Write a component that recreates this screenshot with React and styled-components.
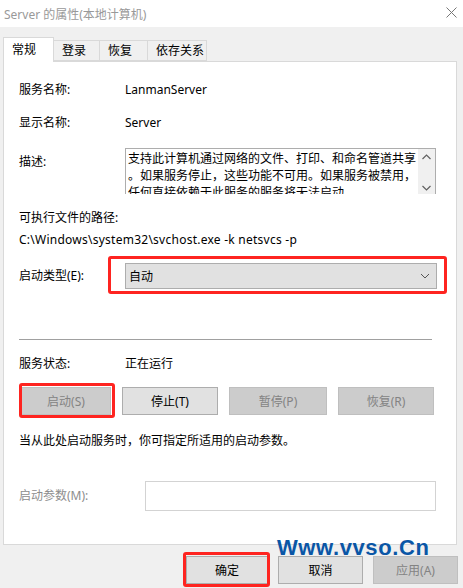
import React from 'react';
import styled, { createGlobalStyle } from 'styled-components';

const Global = createGlobalStyle`
  html, body {
    margin: 0;
    padding: 0;
    background: #f0f0f0;
  }
  body {
    font-family: "Noto Sans", "Noto Sans CJK SC", sans-serif;
    font-size: 12px;
    color: #000;
  }
`

const Window = styled.div`
  width: 463px;
  height: 588px;
  position: relative;
  overflow: hidden;
  background: #f0f0f0;
`
const TitleBar = styled.div`
  height: 27px;
  background: #fff;
  display: flex;
  align-items: center;
  justify-content: space-between;
  padding: 0 6px 0 4px;
  color: #999;
  font-size: 12px;
`
const CloseX = styled.svg`
  width: 11px;
  height: 11px;
  margin-top: -3px;
`
const Tabs = styled.div`
  display: flex;
  align-items: flex-end;
  margin: 9px 0 0 3px;
  height: 25px;
`
const Tab = styled.div`
  height: ${p => (p.$active ? '25px' : '21px')};
  width: ${p => p.$w}px;
  box-sizing: border-box;
  border: 1px solid #d9d9d9;
  border-bottom: ${p => (p.$active ? 'none' : '1px solid #d9d9d9')};
  border-left: ${p => (p.$first ? '1px solid #d9d9d9' : 'none')};
  background: ${p => (p.$active ? '#fff' : '#f0f0f0')};
  padding: ${p => (p.$active ? '2px 0 0 8px' : '0 0 0 8px')};
  line-height: 19px;
  position: relative;
  z-index: ${p => (p.$active ? 2 : 0)};
  margin-bottom: ${p => (p.$active ? '-1px' : '0')};
`
const Panel = styled.div`
  margin-left: 3px;
  width: 454px;
  height: 484px;
  box-sizing: border-box;
  background: #fff;
  border: 1px solid #d9d9d9;
  padding: 18px 0 0 15px;
  display: flex;
  flex-direction: column;
`
const Row = styled.div`
  display: flex;
  align-items: ${p => (p.$top ? 'flex-start' : 'center')};
  min-height: 20px;
  margin-top: ${p => p.$mt || 0}px;
`
const Label = styled.div`
  width: ${p => p.$w || 106}px;
  flex: none;
  line-height: 20px;
  color: ${p => (p.$dim ? '#8d8d8d' : '#000')};
  padding-top: ${p => p.$pt || 0}px;
`
const Value = styled.div`
  line-height: 20px;
`
const Line = styled.div`
  line-height: 20px;
  margin-top: ${p => p.$mt || 0}px;
  letter-spacing: ${p => p.$ls || 0}px;
`
const DescBox = styled.div`
  width: 311px;
  height: 46px;
  box-sizing: border-box;
  border: 1px solid #adadad;
  border-bottom: none;
  display: flex;
  overflow: hidden;
`
const DescText = styled.div`
  flex: 1;
  padding: 1px 0 0 2px;
  line-height: 17px;
  line-break: anywhere;
`
const ScrollBar = styled.div`
  width: 17px;
  flex: none;
  background: #f0f0f0;
  display: flex;
  flex-direction: column;
  justify-content: space-between;
  align-items: center;
  padding: 5px 0 3px;
`
const Arrow = styled.svg`
  width: 9px;
  height: 6px;
`
const Hilite = styled.div`
  position: relative;
  &::after {
    content: '';
    position: absolute;
    left: ${p => p.$l}px;
    top: ${p => p.$t}px;
    right: ${p => p.$r}px;
    bottom: ${p => p.$b}px;
    border: 3px solid #fe2420;
    border-radius: 3px;
    pointer-events: none;
  }
`
const Select = styled.div`
  width: 312px;
  height: 26px;
  box-sizing: border-box;
  background: #e1e1e1;
  border: 1px solid #adadad;
  display: flex;
  align-items: center;
  justify-content: space-between;
  padding: 0 6px 0 3px;
`
const Separator = styled.div`
  width: 413px;
  height: 1px;
  background: #a0a0a0;
  margin-top: 50px;
`
const ButtonRow = styled.div`
  display: grid;
  grid-template-columns: 90px 96px 98px 96px;
  column-gap: 11px;
  margin: 13px 0 0 2px;
`
const Button = styled.div`
  height: 28px;
  box-sizing: border-box;
  border: 1px solid ${p => (p.$disabled ? '#bfbfbf' : '#adadad')};
  background: ${p => (p.$disabled ? '#cccccc' : '#e1e1e1')};
  color: ${p => (p.$disabled ? '#838383' : '#000')};
  display: flex;
  align-items: center;
  justify-content: center;
  width: ${p => (p.$w ? p.$w + 'px' : 'auto')};
`
const Input = styled.div`
  width: 291px;
  height: 30px;
  box-sizing: border-box;
  border: 1px solid #d3d3d3;
`
const Footer = styled.div`
  display: flex;
  justify-content: flex-end;
  gap: 10px;
  padding: 11px 5px 0 0;
`
const Watermark = styled.div`
  position: absolute;
  left: 277px;
  top: 535px;
  font-family: "Liberation Sans", Arial, sans-serif;
  font-weight: bold;
  font-size: 22px;
  letter-spacing: 0.6px;
  color: #0a56a6;
  pointer-events: none;
`

export default function App() {
  return (
    <Window>
      <Global />
      <TitleBar>
        <span>Server 的属性(本地计算机)</span>
        <CloseX viewBox="0 0 11 11">
          <path d="M0.5 0.5L10.5 10.5M10.5 0.5L0.5 10.5" stroke="#777" strokeWidth="1" fill="none" />
        </CloseX>
      </TitleBar>
      <Tabs>
        <Tab $active $first $w={51}>常规</Tab>
        <Tab $w={46}>登录</Tab>
        <Tab $w={48}>恢复</Tab>
        <Tab $w={59}>依存关系</Tab>
      </Tabs>
      <Panel>
        <Row>
          <Label>服务名称:</Label>
          <Value>LanmanServer</Value>
        </Row>
        <Row $mt={13}>
          <Label>显示名称:</Label>
          <Value>Server</Value>
        </Row>
        <Row $top $mt={15}>
          <Label $pt={4}>描述:</Label>
          <DescBox>
            <DescText>
              支持此计算机通过网络的文件、打印、和命名管道共享。如果服务停止，这些功能不可用。如果服务被禁用，任何直接依赖于此服务的服务将无法启动。
            </DescText>
            <ScrollBar>
              <Arrow viewBox="0 0 9 6">
                <path d="M0.5 5L4.5 1L8.5 5" stroke="#606060" strokeWidth="1.2" fill="none" />
              </Arrow>
              <Arrow viewBox="0 0 9 6">
                <path d="M0.5 1L4.5 5L8.5 1" stroke="#606060" strokeWidth="1.2" fill="none" />
              </Arrow>
            </ScrollBar>
          </DescBox>
        </Row>
        <Line $mt={14}>可执行文件的路径:</Line>
        <Line $mt={2} $ls={0.25}>C:\Windows\system32\svchost.exe -k netsvcs -p</Line>
        <Row $mt={13}>
          <Label>启动类型(E):</Label>
          <Hilite $l={-17} $t={-7} $r={-10} $b={-5}>
            <Select>
              <span>自动</span>
              <Arrow viewBox="0 0 9 6" style={{ width: 10 }}>
                <path d="M0.5 1L4.5 5L8.5 1" stroke="#555" strokeWidth="1" fill="none" />
              </Arrow>
            </Select>
          </Hilite>
        </Row>
        <Separator />
        <Row $mt={14}>
          <Label>服务状态:</Label>
          <Value>正在运行</Value>
        </Row>
        <ButtonRow>
          <Hilite $l={-2} $t={-4} $r={-4} $b={-3}>
            <Button $disabled>启动(S)</Button>
          </Hilite>
          <Button>停止(T)</Button>
          <Button $disabled>暂停(P)</Button>
          <Button $disabled>恢复(R)</Button>
        </ButtonRow>
        <Line $mt={16}>当从此处启动服务时，你可指定所适用的启动参数。</Line>
        <Row $mt={30}>
          <Label $w={126} $dim>启动参数(M):</Label>
          <Input />
        </Row>
      </Panel>
      <Footer>
        <Hilite $l={-3} $t={-4} $r={-2} $b={-3}>
          <Button $w={82}>确定</Button>
        </Hilite>
        <Button $w={85}>取消</Button>
        <Button $disabled $w={85}>应用(A)</Button>
      </Footer>
      <Watermark>Www.vvso.Cn</Watermark>
    </Window>
  );
}
